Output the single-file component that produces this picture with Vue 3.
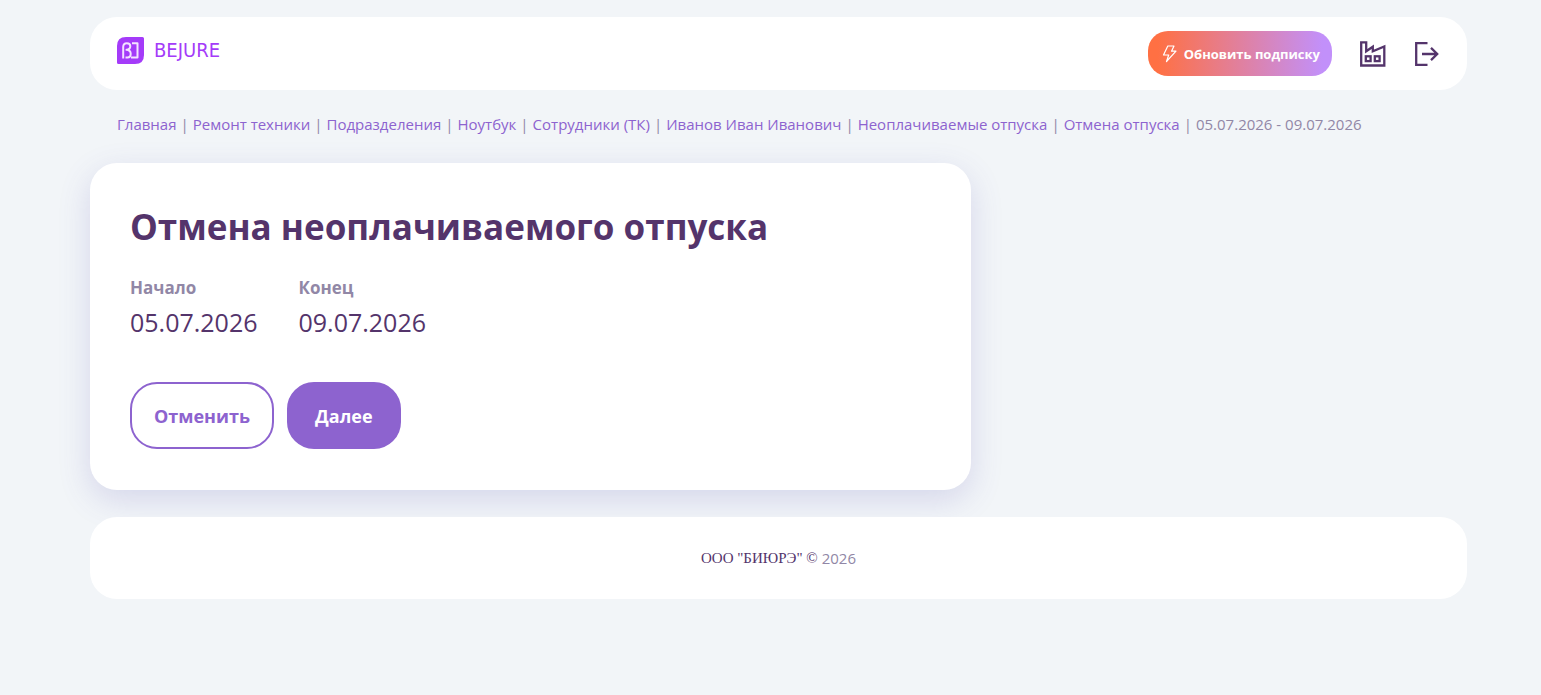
<script setup>
const crumbs = [
  'Главная',
  'Ремонт техники',
  'Подразделения',
  'Ноутбук',
  'Сотрудники (ТК)',
  'Иванов Иван Иванович',
  'Неоплачиваемые отпуска',
  'Отмена отпуска',
]
const period = { start: '05.07.2026', end: '09.07.2026' }
</script>

<template>
  <div class="page">
    <header class="header">
      <a href="#" class="logo">
        <svg class="logo-mark" viewBox="0 0 27 27" aria-hidden="true">
          <path d="M9 0H25.500Q27 0 27 1.500V18Q27 27 18 27H1.500Q0 27 0 25.500V9Q0 0 9 0Z" fill="#a43bf9" />
          <g fill="none" stroke="#f3e3ff" stroke-width="2" stroke-linejoin="round">
            <path d="M6.200 21.500V10Q6.200 6.200 9.800 6.200Q13.300 6.200 13.300 9.300Q13.300 12.500 9.500 12.800Q13.700 13.300 13.700 16.800Q13.700 20.500 10.500 20.500H8.500" />
            <path d="M15 6.200H20.500V20.500H14" />
          </g>
        </svg>
        <span class="logo-text">BEJURE</span>
      </a>
      <nav class="actions" aria-label="Действия">
        <button type="button" class="upgrade">
          <svg class="bolt" viewBox="0 0 16 18" aria-hidden="true">
            <path d="M5.800 1H12L9.500 6.200H14L4.500 16.500L6.700 10H1.500Z" fill="none" stroke="#fff" stroke-width="1.200" stroke-linejoin="round" />
          </svg>
          <span>Обновить подписку</span>
        </button>
        <a href="#" class="icon-link" aria-label="Предприятие">
          <svg class="icon" viewBox="0 0 26 26" fill="none" stroke="#54346b" stroke-width="2.300" aria-hidden="true">
            <path d="M1.200 24.500V1.300H6.200V10.300L12.800 5.700V10.300L24.300 5.500V24.500Z" fill="none" />
            <rect x="5.800" y="15.300" width="4.800" height="4.800" />
            <rect x="14.800" y="15.300" width="4.800" height="4.800" />
          </svg>
        </a>
        <a href="#" class="icon-link" aria-label="Выйти">
          <svg class="icon" viewBox="0 0 26 26" fill="none" stroke="#54346b" stroke-width="2.300" aria-hidden="true">
            <path d="M13.500 2.200H2.200V23.800H13.500M8 13H23.500M17 6.900L23.200 13L17 19.100" />
          </svg>
        </a>
      </nav>
    </header>

    <nav class="crumbs" aria-label="Навигация">
      <template v-for="crumb in crumbs" :key="crumb">
        <a href="#">{{ crumb }}</a>
        <span class="bar">|</span>
      </template>
      <span>{{ period.start }} - {{ period.end }}</span>
    </nav>

    <main class="card">
      <h1>Отмена неоплачиваемого отпуска</h1>
      <dl class="dates">
        <div>
          <dt>Начало</dt>
          <dd>{{ period.start }}</dd>
        </div>
        <div>
          <dt>Конец</dt>
          <dd>{{ period.end }}</dd>
        </div>
      </dl>
      <div class="buttons">
        <button type="button" class="btn outline">Отменить</button>
        <button type="button" class="btn filled">Далее</button>
      </div>
    </main>

    <footer class="footer">
      <span class="company">ООО "БИЮРЭ" ©</span>
      <span>2026</span>
    </footer>
  </div>
</template>

<style>
body {
  margin: 0;
  background: #f2f5f8;
}
</style>

<style scoped>
.page {
  box-sizing: border-box;
  padding: 17px 74px 24px 90px;
  font-family: 'Segoe UI', 'Open Sans', 'Noto Sans', sans-serif;
  color: #54346b;
}
a {
  color: #8d63cf;
  text-decoration: none;
}
button {
  font-family: inherit;
  font-weight: 700;
  cursor: pointer;
}
.header {
  display: flex;
  align-items: center;
  justify-content: space-between;
  box-sizing: border-box;
  min-height: 73px;
  padding: 0 27px;
  border-radius: 27px;
  background: #fff;
}
.logo {
  display: flex;
  align-items: center;
  gap: 10px;
  padding-bottom: 6px;
}
.logo-mark {
  width: 27px;
  height: 27px;
}
.logo-text {
  font-family: 'Liberation Sans Narrow', 'DejaVu Sans Condensed', sans-serif;
  font-size: 20px;
  line-height: 27px;
  color: #a43bf9;
}
.actions {
  display: flex;
  align-items: center;
  gap: 28px;
}
.upgrade {
  display: flex;
  align-items: center;
  gap: 6px;
  height: 45px;
  padding: 0 12px 0 14px;
  border: 0;
  border-radius: 20px;
  background: linear-gradient(90deg, #ff7043 5%, #c290fa 95%);
  color: #fff;
  font-size: 13px;
}
.bolt {
  width: 16px;
  height: 18px;
}
.icon-link,
.icon {
  display: block;
  width: 26px;
  height: 26px;
}
.crumbs {
  display: flex;
  flex-wrap: wrap;
  gap: 0 4px;
  padding: 24px 27px 28px;
  font-size: 15px;
  line-height: 21px;
  color: #9187a6;
}
.card {
  box-sizing: border-box;
  width: 64%;
  padding: 40px 40px 41px;
  border-radius: 27px;
  background: #fff;
  box-shadow: 0 10px 32px rgba(85, 75, 175, 0.18);
}
h1 {
  margin: 0;
  font-size: 35px;
  line-height: 48px;
}
.dates {
  display: flex;
  gap: 41px;
  margin: 24px 0 42px;
}
dt {
  font-size: 17px;
  font-weight: 700;
  line-height: 26px;
  color: #9187a6;
}
dd {
  margin: 0;
  padding-top: 4px;
  font-size: 25px;
  line-height: 35px;
}
.buttons {
  display: flex;
  gap: 13px;
}
.btn {
  height: 67px;
  border: 2px solid #8d63cf;
  border-radius: 27px;
  font-size: 18px;
}
.outline {
  padding: 0 22px;
  background: #fff;
  color: #8d63cf;
}
.filled {
  padding: 0 26px;
  background: #8d63cf;
  color: #fff;
}
.footer {
  position: relative;
  display: flex;
  align-items: center;
  justify-content: center;
  gap: 4px;
  min-height: 82px;
  margin-top: 27px;
  border-radius: 27px;
  background: #fff;
  font-size: 15px;
  color: #9187a6;
}
.company {
  font-family: 'Liberation Serif', serif;
  color: #54346b;
}
</style>
